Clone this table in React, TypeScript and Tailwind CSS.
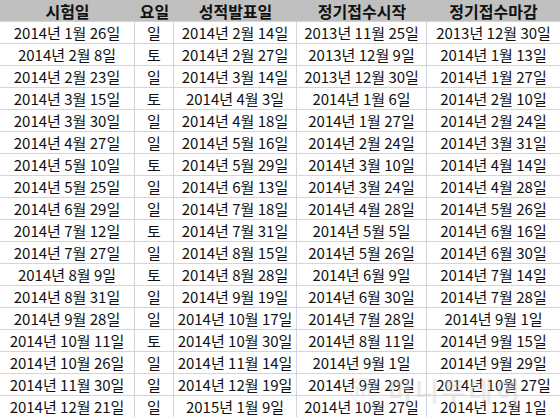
import React from 'react';

const rows: string[][] = [
  ['2014년 1월 26일', '일', '2014년 2월 14일', '2013년 11월 25일', '2013년 12월 30일'],
  ['2014년 2월 8일', '토', '2014년 2월 27일', '2013년 12월 9일', '2014년 1월 13일'],
  ['2014년 2월 23일', '일', '2014년 3월 14일', '2013년 12월 30일', '2014년 1월 27일'],
  ['2014년 3월 15일', '토', '2014년 4월 3일', '2014년 1월 6일', '2014년 2월 10일'],
  ['2014년 3월 30일', '일', '2014년 4월 18일', '2014년 1월 27일', '2014년 2월 24일'],
  ['2014년 4월 27일', '일', '2014년 5월 16일', '2014년 2월 24일', '2014년 3월 31일'],
  ['2014년 5월 10일', '토', '2014년 5월 29일', '2014년 3월 10일', '2014년 4월 14일'],
  ['2014년 5월 25일', '일', '2014년 6월 13일', '2014년 3월 24일', '2014년 4월 28일'],
  ['2014년 6월 29일', '일', '2014년 7월 18일', '2014년 4월 28일', '2014년 5월 26일'],
  ['2014년 7월 12일', '토', '2014년 7월 31일', '2014년 5월 5일', '2014년 6월 16일'],
  ['2014년 7월 27일', '일', '2014년 8월 15일', '2014년 5월 26일', '2014년 6월 30일'],
  ['2014년 8월 9일', '토', '2014년 8월 28일', '2014년 6월 9일', '2014년 7월 14일'],
  ['2014년 8월 31일', '일', '2014년 9월 19일', '2014년 6월 30일', '2014년 7월 28일'],
  ['2014년 9월 28일', '일', '2014년 10월 17일', '2014년 7월 28일', '2014년 9월 1일'],
  ['2014년 10월 11일', '토', '2014년 10월 30일', '2014년 8월 11일', '2014년 9월 15일'],
  ['2014년 10월 26일', '일', '2014년 11월 14일', '2014년 9월 1일', '2014년 9월 29일'],
  ['2014년 11월 30일', '일', '2014년 12월 19일', '2014년 9월 29일', '2014년 10월 27일'],
  ['2014년 12월 21일', '일', '2015년 1월 9일', '2014년 10월 27일', '2014년 12월 1일'],
];

const headers = ['시험일', '요일', '성적발표일', '정기접수시작', '정기접수마감'];

export default function App() {
  return (
    <div className="relative w-[560px] h-[417px] overflow-hidden bg-white text-[#111] font-['Noto_Sans_CJK_KR',sans-serif]">
      <div className="grid grid-cols-[135px_39px_123px_130px_133px] grid-rows-[21px_repeat(18,22px)]">
        {headers.map((h) => (
          <div
            key={h}
            className="flex items-center justify-center bg-[#c0c0c0] text-[16px] font-bold leading-none"
          >
            {h}
          </div>
        ))}
        {rows.map((r, ri) =>
          r.map((c, ci) => (
            <div
              key={`${ri}-${ci}`}
              className={`flex items-center justify-center border-t border-[#d0d6e0] text-[15px] leading-none whitespace-nowrap ${ci < 4 ? 'border-r' : ''}`}
            >
              {c}
            </div>
          ))
        )}
      </div>
      {/* faint watermark */}
      <div className="pointer-events-none absolute left-[350px] top-[370px] flex items-center gap-3 text-[26px] font-bold text-[#c8c8c8] opacity-35 select-none">
        <span>ⓜ</span>
        <span className="tracking-[3px]">머니투데이</span>
      </div>
    </div>
  );
}
